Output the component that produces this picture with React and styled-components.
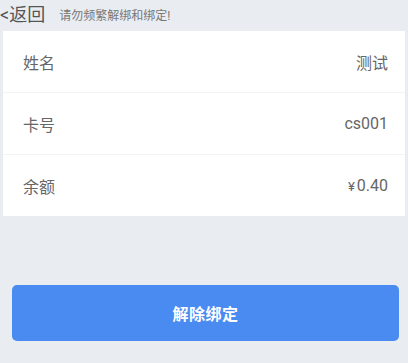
import React from "react";
import styled, { createGlobalStyle } from "styled-components";

const Global = createGlobalStyle`
  html, body { margin: 0; padding: 0; background: #e9edf2; }
  body { font-family: Roboto, "Noto Sans CJK SC", sans-serif; }
`;

const Page = styled.div`
  width: 408px;
  height: 363px;
  background: #e9edf2;
  display: flex;
  flex-direction: column;
`;

const Header = styled.div`
  height: 31px;
  display: flex;
  align-items: center;
  gap: 14px;
  padding-bottom: 1px;
  box-sizing: border-box;
`;

const Back = styled.span`
  font-size: 18px;
  color: #555;
  line-height: 1;
`;

const Tip = styled.span`
  font-size: 12px;
  color: #777;
  line-height: 1;
  margin-top: 1px;
`;

const Card = styled.div`
  margin: 0 3px;
  background: #fff;
  display: flex;
  flex-direction: column;
`;

const Row = styled.div`
  height: 61px;
  display: flex;
  align-items: center;
  justify-content: space-between;
  padding: 0 17px 0 20px;
  border-top: ${(p) => (p.$first ? "none" : "1px solid #f1f3f6")};
  font-size: 16px;
  color: #666;
`;

const Value = styled.span`
  color: #666;
`;

const Yen = styled.span`
  font-size: 13px;
  margin-right: 2px;
`;

const Button = styled.button`
  margin: 69px 9px 0 12px;
  height: 56px;
  border: none;
  border-radius: 5px;
  background: #4a8bf2;
  color: #fff;
  font-family: "Noto Sans CJK SC", sans-serif;
  font-size: 16px;
  font-weight: 700;
  letter-spacing: 0.5px;
`;

export default function App() {
  return (
    <Page>
      <Global />
      <Header>
        <Back>&lt;返回</Back>
        <Tip>请勿频繁解绑和绑定!</Tip>
      </Header>
      <Card>
        <Row $first>
          <span>姓名</span>
          <Value>测试</Value>
        </Row>
        <Row>
          <span>卡号</span>
          <Value>cs001</Value>
        </Row>
        <Row>
          <span>余额</span>
          <Value>
            <Yen>¥</Yen>0.40
          </Value>
        </Row>
      </Card>
      <Button>解除绑定</Button>
    </Page>
  );
}
